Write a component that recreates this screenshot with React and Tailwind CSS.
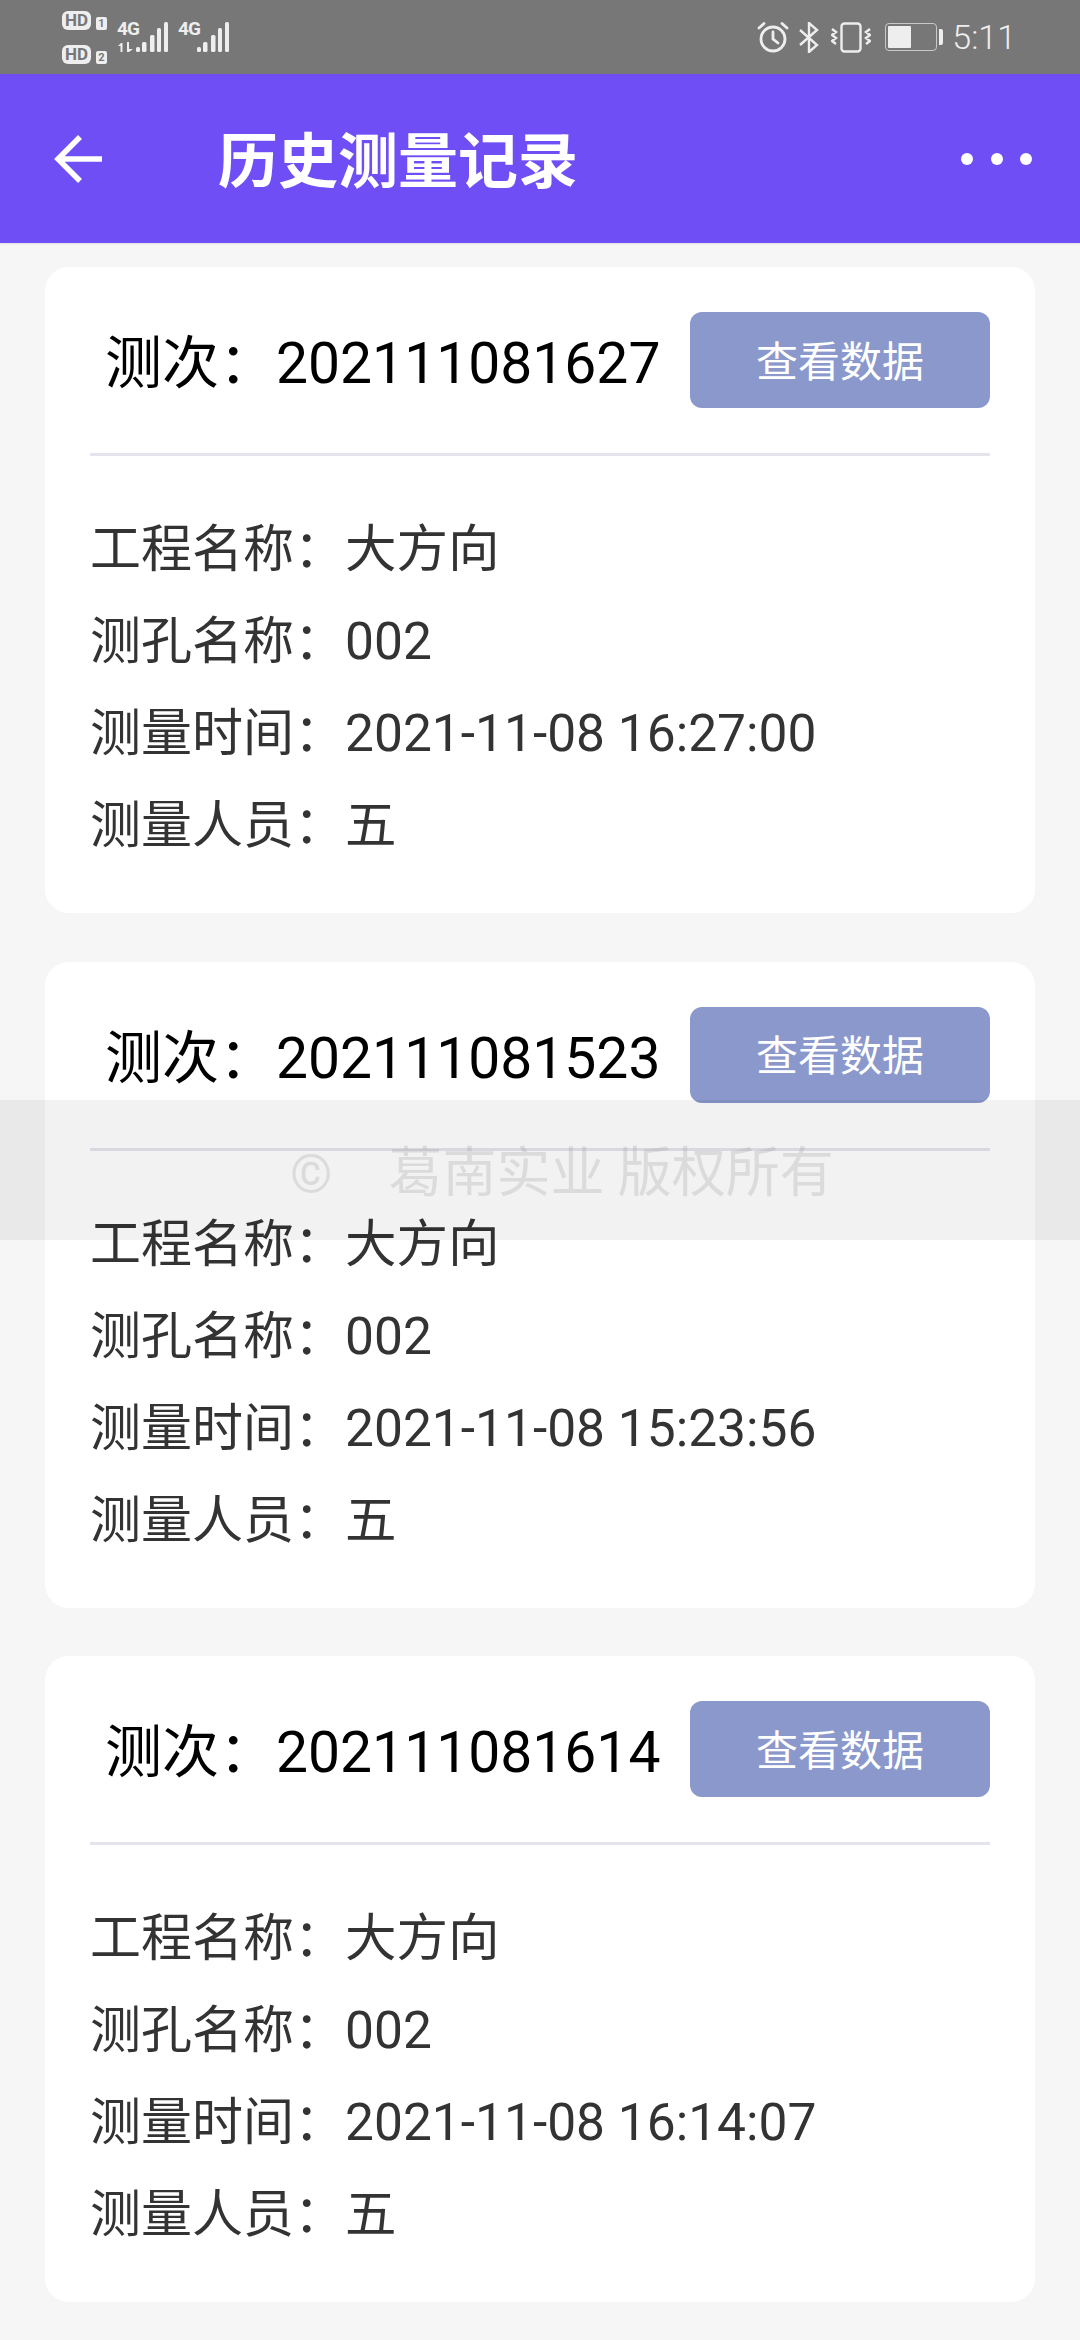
const records = [
  { id: '202111081627', time: '2021-11-08 16:27:00' },
  { id: '202111081523', time: '2021-11-08 15:23:56' },
  { id: '202111081614', time: '2021-11-08 16:14:07' },
]

function SimBadge({ num }) {
  return (
    <div className="flex items-end gap-[5px] h-[20px]">
      <span className="w-[29px] h-[19px] rounded-[6px] bg-[#eeeeee] text-[#777777] text-[17px] font-bold leading-[19px] text-center">HD</span>
      <span className="w-[11px] h-[13px] rounded-[2px] bg-[#eeeeee] text-[#777777] text-[11px] font-bold leading-[13px] text-center">{num}</span>
    </div>
  )
}

function Signal({ arrows }) {
  return (
    <div className="relative w-[51px] h-[30px]">
      <span className="absolute left-0 -top-[2px] text-[#eeeeee] text-[19px] font-bold leading-[18px] tracking-[-1px]">4G</span>
      <svg className="absolute left-0 top-0" width="51" height="30" viewBox="0 0 51 30" fill="#eeeeee">
        {arrows && <path d="M1 24l3-3h1.500v9H3.500v-6H1zM10 20h2v7h4l-4 3h-2z" />}
        <rect x="19" y="25" width="4" height="5" rx="1.500" />
        <rect x="25" y="20" width="4.500" height="10" rx="1.500" />
        <rect x="33" y="13" width="4.500" height="17" rx="1.500" />
        <rect x="40" y="6" width="4" height="24" rx="1.500" />
        <rect x="47" y="0" width="4" height="30" rx="1.500" />
      </svg>
    </div>
  )
}

function StatusBar() {
  return (
    <div className="h-[74px] bg-[#777777] flex justify-between pl-[62px] pr-[64px] shrink-0">
      <div className="flex items-start pt-[10px]">
        <div className="flex flex-col gap-[14px] mr-[10px]">
          <SimBadge num="1" />
          <SimBadge num="2" />
        </div>
        <div className="flex gap-[10px] pt-[12px]">
          <Signal arrows />
          <Signal />
        </div>
      </div>
      <div className="flex items-center">
        <svg width="32" height="32" viewBox="0 0 32 32" fill="none" stroke="#eeeeee" strokeWidth="2.800" strokeLinecap="round" className="mr-[10px]">
          <circle cx="16" cy="18" r="12" />
          <path d="M16 11v7l5 4M2 7l5-4.500M30 7l-5-4.500" />
        </svg>
        <svg width="20" height="31" viewBox="0 0 20 31" fill="none" stroke="#eeeeee" strokeWidth="2.400" className="mr-[12px]">
          <path d="M1 8l17 15-8 7V1l8 7L1 23" />
        </svg>
        <svg width="40" height="31" viewBox="0 0 40 31" fill="none" stroke="#eeeeee" strokeWidth="2.400" className="mr-[14px]">
          <rect x="10.500" y="1.500" width="19" height="28" rx="3" />
          <path d="M1 7l4 3-4 3 4 3-4 3 4 3M39 7l-4 3 4 3-4 3 4 3-4 3" />
        </svg>
        <div className="flex items-center mr-[9px]">
          <div className="w-[52px] h-[28px] rounded-[4px] border-[1.500px] border-[#c8c8c8] p-[2px]">
            <div className="w-[23px] h-full bg-[#eeeeee] rounded-[1px]" />
          </div>
          <div className="w-[4px] h-[16px] bg-[#eeeeee] rounded-r-[2px] ml-[2px]" />
        </div>
        <span className="text-[34px] leading-[40px] font-light text-[#eeeeee]">5:11</span>
      </div>
    </div>
  )
}

function Header() {
  return (
    <div className="h-[169px] bg-[#6f4ff5] flex items-center shrink-0 pl-[54px] pr-[48px] shadow-[0_1px_2px_rgba(0,0,0,0.1)]">
      <svg width="48" height="48" viewBox="0 0 48 48" fill="none" stroke="#ffffff" strokeWidth="5.500">
        <path d="M48 24H4M26 2L4 24l22 22" />
      </svg>
      <h1 className="ml-[116px] flex-1 pt-[8px] text-[60px] font-bold leading-[70px] text-white">历史测量记录</h1>
      <div className="flex gap-[17.500px]">
        <span className="w-[12px] h-[12px] rounded-full bg-white" />
        <span className="w-[12px] h-[12px] rounded-full bg-white" />
        <span className="w-[12px] h-[12px] rounded-full bg-white" />
      </div>
    </div>
  )
}

function RecordCard({ record }) {
  const rows = [
    ['工程名称：', '大方向'],
    ['测孔名称：', '002'],
    ['测量时间：', record.time],
    ['测量人员：', '五'],
  ]
  return (
    <div className="bg-white rounded-[24px] pt-[45px] px-[45px] h-[646px]">
      <div className="flex items-center justify-between pb-[45px] border-b-[3px] border-[#e4e4ec]">
        <span className="pl-[15px] pt-[8px] text-[57px] leading-[88px] text-black">测次：{record.id}</span>
        <button className="w-[300px] h-[96px] pt-[4px] rounded-[12px] bg-[#8a98cc] text-white text-[42px]">查看数据</button>
      </div>
      <div className="pt-[48px]">
        {rows.map(([label, value]) => (
          <div key={label} className="h-[92px] text-[51px] leading-[92px] text-[#333333]">
            {label}<span className="text-[51.500px]">{value}</span>
          </div>
        ))}
      </div>
    </div>
  )
}

export default function App() {
  return (
    <div className="relative w-[1080px] h-[2340px] overflow-hidden bg-[#f6f6f6] flex flex-col font-['Roboto','Noto_Sans_CJK_SC',sans-serif]">
      <StatusBar />
      <Header />
      <div className="flex flex-col gap-[48.500px] pt-[24px] px-[45px]">
        {records.map((record) => (
          <RecordCard key={record.id} record={record} />
        ))}
      </div>
      {/* 版权提示 */}
      <div className="absolute left-0 right-0 top-[1100px] h-[140px] pt-[6px] bg-[rgba(0,0,0,0.05)] flex items-center pl-[290px] text-[54px] text-[rgba(150,150,150,0.25)]">
        <span className="mr-[56px]">©</span>
        <span>葛南实业 版权所有</span>
      </div>
    </div>
  )
}
